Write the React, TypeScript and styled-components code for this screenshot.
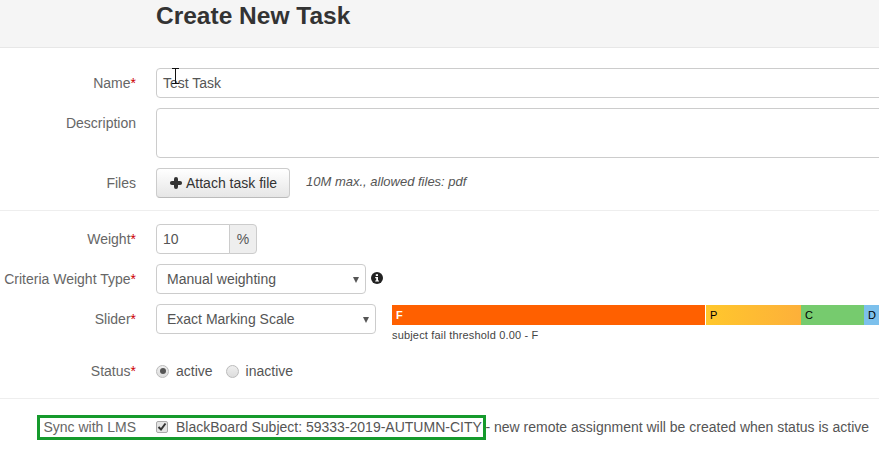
import React from "react";
import styled, { createGlobalStyle } from "styled-components";
import { Plus } from "lucide-react";

const Global = createGlobalStyle`
  html, body {
    margin: 0;
    padding: 0;
    background: #fff;
    overflow: hidden;
    font-family: "Liberation Sans", Arial, sans-serif;
    font-size: 14px;
    color: #555;
  }
`;

function Req() {
  return <Star>*</Star>;
}

export default function App() {
  return (
    <Page>
      <Global />
      <Header>
        <Title>Create New Task</Title>
      </Header>
      <Section>
        <Row>
          <Label>
            Name
            <Req />
          </Label>
          <Field>
            <TextInput>Test Task</TextInput>
            <Cursor width="9" height="16" viewBox="0 0 9 16">
              <path d="M1 .5h7M1 15.5h7M4.5 .5v15" stroke="#111" fill="none" />
            </Cursor>
          </Field>
        </Row>
        <Row>
          <Label>Description</Label>
          <Field>
            <TextArea />
          </Field>
        </Row>
        <Row>
          <Label>Files</Label>
          <Field>
            <Button>
              <Plus size={14} strokeWidth={4} color="#333" absoluteStrokeWidth />
              Attach task file
            </Button>
            <Hint>10M max., allowed files: pdf</Hint>
          </Field>
        </Row>
      </Section>
      <Section>
        <Row>
          <Label>
            Weight
            <Req />
          </Label>
          <Field>
            <WeightInput>10</WeightInput>
            <Addon>%</Addon>
          </Field>
        </Row>
        <Row>
          <Label>
            Criteria Weight Type
            <Req />
          </Label>
          <Field>
            <Select $width={210}>Manual weighting</Select>
            <InfoBadge width="12" height="12" viewBox="0 0 12 12">
              <circle cx="6" cy="6" r="6" fill="#222" />
              <path d="M4.8 2.2h2.2v1.7H4.8zM4.2 5h2.8v3.4h1v1.2H4.2V8.4h1V6.2h-1z" fill="#fff" />
            </InfoBadge>
          </Field>
        </Row>
        <Row>
          <Label>
            Slider
            <Req />
          </Label>
          <SliderField>
            <Select $width={220}>Exact Marking Scale</Select>
            <Scale>
              <Bar>
                <Segment $width={313} $bg="#ff6000" $fg="#fff" $bold>
                  F
                </Segment>
                <Segment $width={95} $bg="linear-gradient(90deg, #ffc72c, #fdb03a)" $gap>
                  P
                </Segment>
                <Segment $width={63} $bg="#76cb6e">
                  C
                </Segment>
                <Segment $width={16} $bg="#7cc0ec">
                  D
                </Segment>
              </Bar>
              <Threshold>subject fail threshold 0.00 - F</Threshold>
            </Scale>
          </SliderField>
        </Row>
        <StatusRow>
          <Label>
            Status
            <Req />
          </Label>
          <Field>
            <Choice>
              <Radio $on />
              active
            </Choice>
            <Choice>
              <Radio />
              inactive
            </Choice>
          </Field>
        </StatusRow>
      </Section>
      <SyncRow>
        <Highlight />
        <Label>Sync with LMS</Label>
        <Field>
          <Check>
            <svg width="10" height="10" viewBox="0 0 10 10">
              <path d="M1.5 5l2.5 2.5 4.5-6" stroke="#333" strokeWidth="2" fill="none" />
            </svg>
          </Check>
          <SyncText>BlackBoard Subject: 59333-2019-AUTUMN-CITY - new remote assignment will be created when status is active</SyncText>
        </Field>
      </SyncRow>
    </Page>
  );
}

const Page = styled.div`
  width: 879px;
  height: 453px;
  overflow: hidden;
`;

const Header = styled.header`
  height: 47px;
  background: #f5f5f5;
  border-bottom: 1px solid #e7e7e7;
  padding-left: 156px;
`;

const Title = styled.h1`
  margin: 0;
  padding-top: 2px;
  font-size: 24.5px;
  line-height: 28px;
  font-weight: 700;
  color: #333;
`;

const Section = styled.section`
  display: flex;
  flex-direction: column;
  gap: 10px;
  padding: 20px 0 12px;
  border-bottom: 1px solid #eee;

  & + & {
    padding: 13px 0 0;
    height: 174px;
  }
`;

const Row = styled.div`
  display: grid;
  grid-template-columns: 136px 1fr;
  column-gap: 20px;
`;

const StatusRow = styled(Row)`
  margin-top: 5px;
`;

const Label = styled.label`
  text-align: right;
  white-space: nowrap;
  line-height: 30px;
  color: #666;
`;

const Star = styled.span`
  color: #c00;
`;

const Field = styled.div`
  position: relative;
  display: flex;
  align-items: center;
  min-width: 0;
  white-space: nowrap;
`;

const SliderField = styled(Field)`
  align-items: flex-start;
  height: 37px;
`;

const Control = styled.div`
  box-sizing: border-box;
  flex: none;
  height: 30px;
  line-height: 28px;
  border: 1px solid #ccc;
  border-radius: 4px;
  background: #fff;
  color: #555;
`;

const TextInput = styled(Control)`
  width: 760px;
  padding-left: 6px;
`;

const TextArea = styled(Control)`
  width: 760px;
  height: 50px;
`;

const Cursor = styled.svg`
  position: absolute;
  left: 15px;
  top: 0;
`;

const Button = styled.button`
  display: flex;
  align-items: center;
  gap: 3px;
  box-sizing: border-box;
  width: 134px;
  height: 30px;
  padding: 0 0 0 12px;
  border: 1px solid #ccc;
  border-bottom-color: #bbb;
  border-radius: 4px;
  background: linear-gradient(#fff, #e6e6e6);
  font: inherit;
  color: #333;
`;

const Hint = styled.em`
  margin: -3px 0 0 16px;
  font-size: 13px;
  color: #555;
`;

const WeightInput = styled(Control)`
  width: 74px;
  padding-left: 6px;
  border-radius: 4px 0 0 4px;
`;

const Addon = styled(Control)`
  width: 28px;
  margin-left: -1px;
  text-align: center;
  background: #eee;
  border-radius: 0 4px 4px 0;
`;

const Select = styled(Control)<{ $width: number }>`
  position: relative;
  width: ${(p) => p.$width}px;
  padding-left: 10px;

  &::after {
    content: "";
    position: absolute;
    right: 6px;
    top: 12px;
    border-style: solid;
    border-width: 6px 3.5px 0;
    border-color: #555 transparent transparent;
  }
`;

const InfoBadge = styled.svg`
  flex: none;
  margin: -2px 0 0 5px;
`;

const Scale = styled.div`
  margin: 1px 0 0 16px;
`;

const Bar = styled.div`
  display: flex;
  height: 20px;
`;

const Segment = styled.div<{ $width: number; $bg: string; $fg?: string; $gap?: boolean; $bold?: boolean }>`
  box-sizing: border-box;
  flex: none;
  width: ${(p) => p.$width}px;
  margin-left: ${(p) => (p.$gap ? 1 : 0)}px;
  padding-left: 4px;
  background: ${(p) => p.$bg};
  color: ${(p) => p.$fg || "#000"};
  font-size: 11px;
  font-weight: ${(p) => (p.$bold ? 700 : 400)};
  line-height: 20px;
`;

const Threshold = styled.div`
  margin-top: 3px;
  font-size: 11px;
  line-height: 14px;
  letter-spacing: 0.17px;
  color: #444;
`;

const Choice = styled.span`
  display: flex;
  align-items: center;
  gap: 7px;
  margin-right: 13px;
  color: #555;
`;

const Radio = styled.span<{ $on?: boolean }>`
  position: relative;
  box-sizing: border-box;
  width: 13px;
  height: 13px;
  border: 1px solid #bbb;
  border-radius: 50%;
  background: linear-gradient(#eee, #ddd);

  &::after {
    content: "";
    display: ${(p) => (p.$on ? "block" : "none")};
    position: absolute;
    left: 2.5px;
    top: 2.5px;
    width: 6px;
    height: 6px;
    border-radius: 50%;
    background: #555;
  }
`;

const SyncRow = styled(Row)`
  position: relative;
  margin-top: 14px;

  ${Label} {
    line-height: 28px;
  }
`;

const Highlight = styled.div`
  position: absolute;
  left: 37px;
  top: 2px;
  box-sizing: border-box;
  width: 449px;
  height: 25px;
  border: 3px solid #159a2c;
  pointer-events: none;
`;

const Check = styled.span`
  display: flex;
  align-items: center;
  justify-content: center;
  box-sizing: border-box;
  width: 12px;
  height: 12px;
  border: 1px solid #aaa;
  border-radius: 2px;
  background: #e4e4e4;
`;

const SyncText = styled.span`
  margin-left: 8px;
  color: #555;
`;
